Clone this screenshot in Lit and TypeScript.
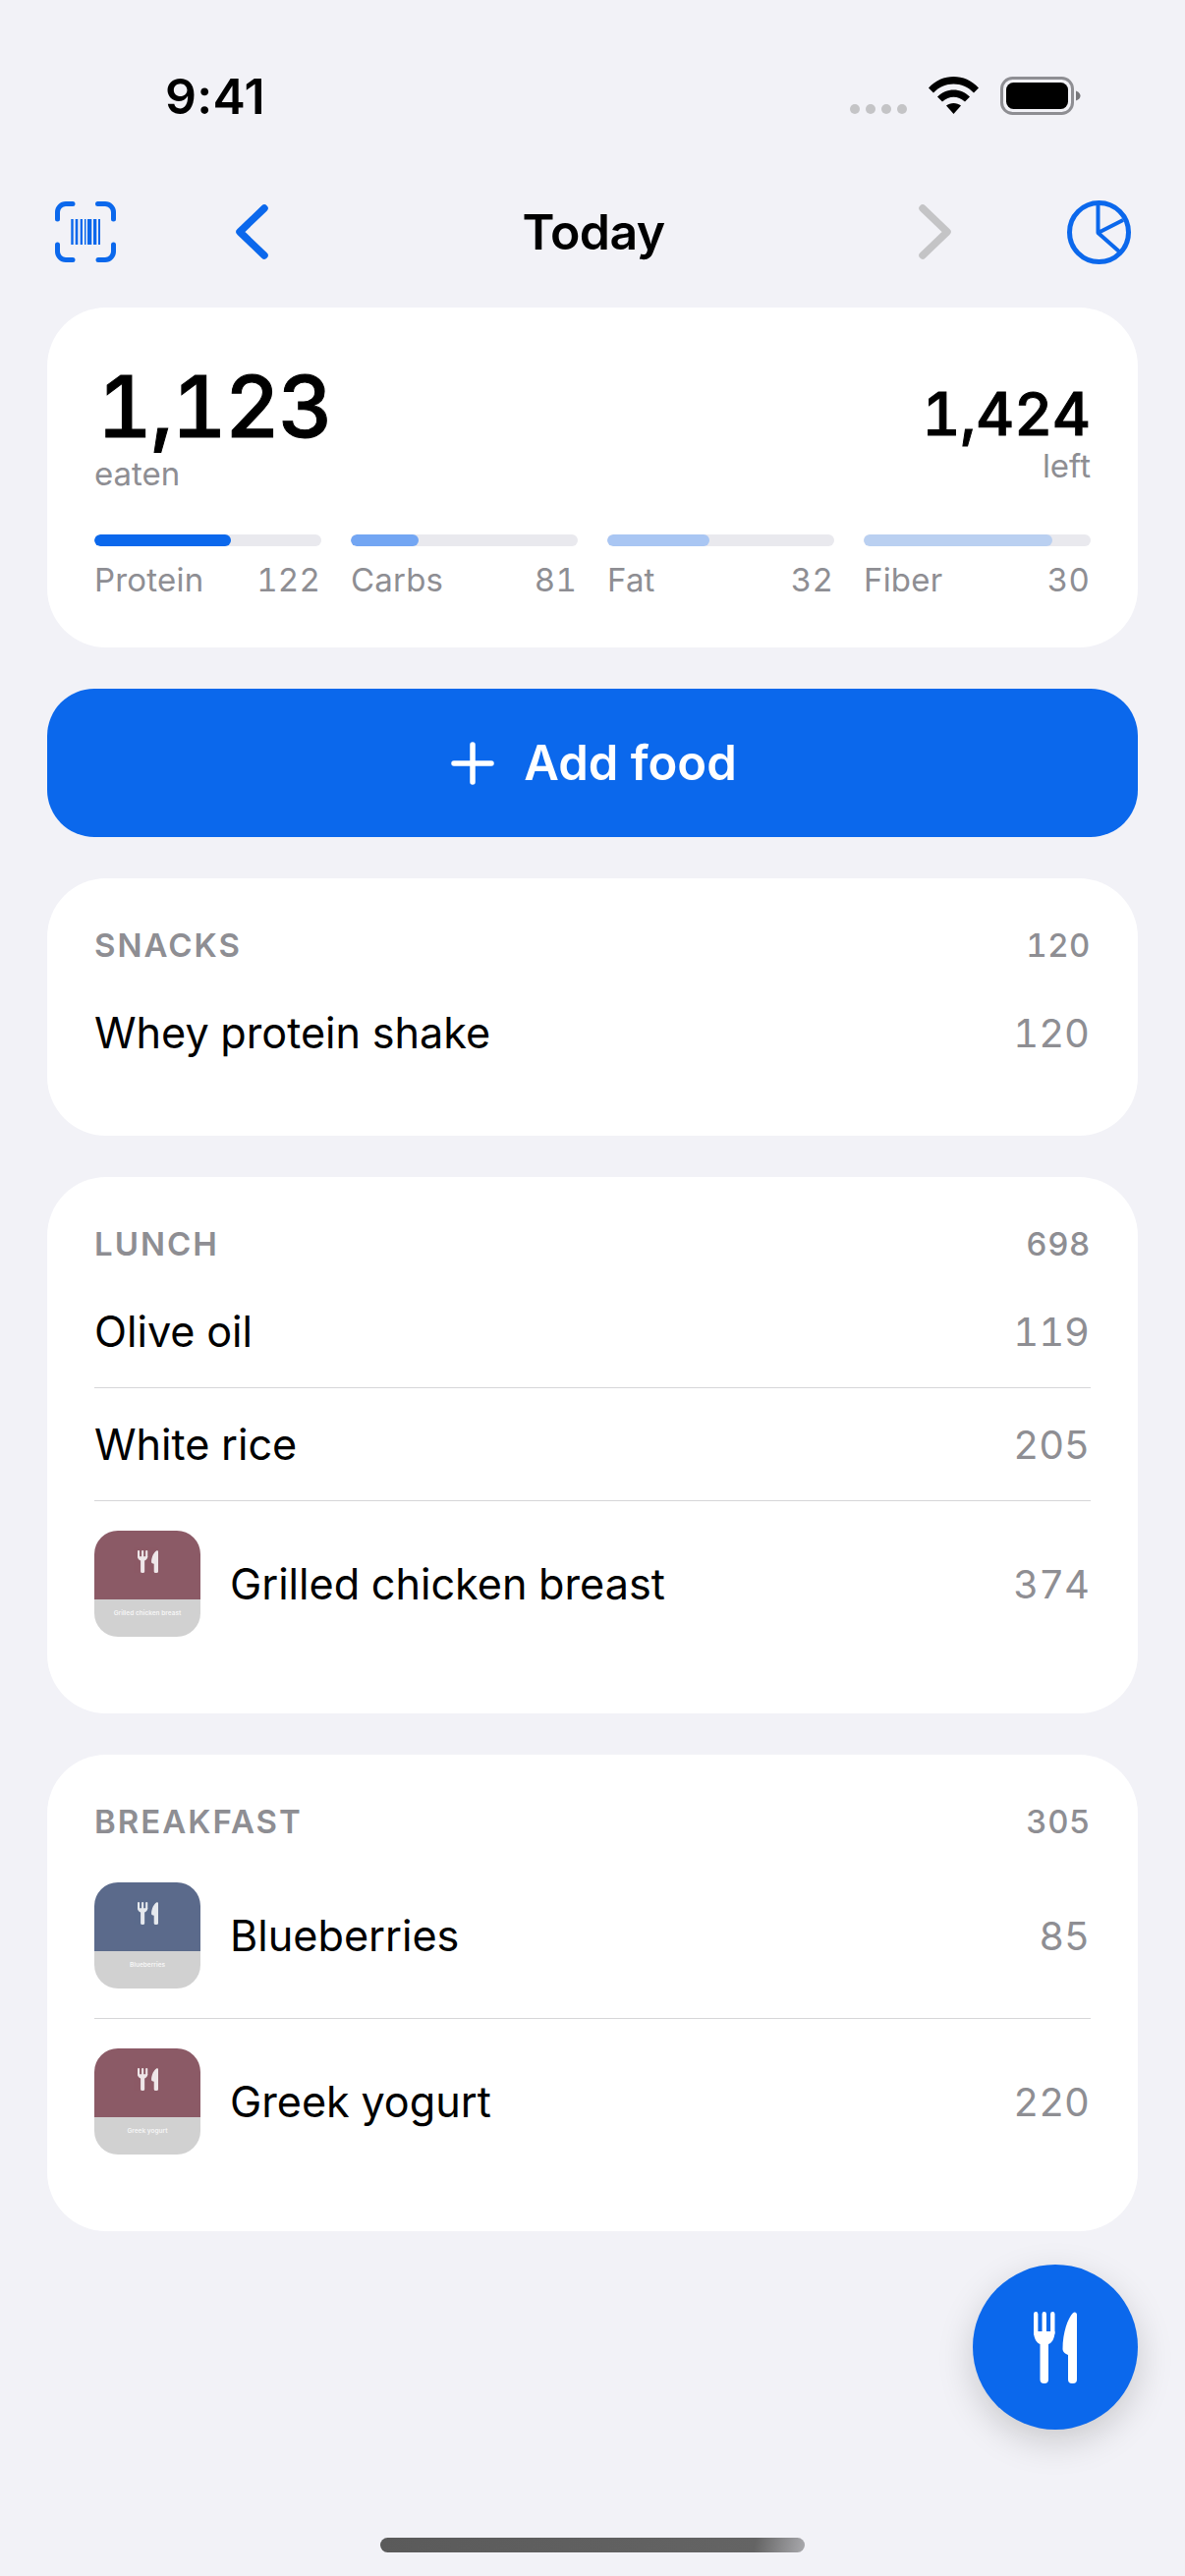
import { LitElement, html, css, svg } from "lit";
import { customElement } from "lit/decorators.js";

type Item = { name: string; kcal: number; thumb?: string };
type Meal = { title: string; total: number; items: Item[] };

const MEALS: Meal[] = [
  { title: "Snacks", total: 120, items: [{ name: "Whey protein shake", kcal: 120 }] },
  {
    title: "Lunch",
    total: 698,
    items: [
      { name: "Olive oil", kcal: 119 },
      { name: "White rice", kcal: 205 },
      { name: "Grilled chicken breast", kcal: 374, thumb: "#8b5a66" },
    ],
  },
  {
    title: "Breakfast",
    total: 305,
    items: [
      { name: "Blueberries", kcal: 85, thumb: "#5b6a8b" },
      { name: "Greek yogurt", kcal: 220, thumb: "#8b5a66" },
    ],
  },
];

const MACROS = [
  { name: "Protein", value: 122, pct: 60, color: "#0b68ec" },
  { name: "Carbs", value: 81, pct: 30, color: "#73a6f3" },
  { name: "Fat", value: 32, pct: 45, color: "#a9c6f3" },
  { name: "Fiber", value: 30, pct: 83, color: "#bad0f1" },
];

const cutlery = svg`
  <path d="M2.2 2.2V22M10.75 2.2V22M19.3 2.2V22" fill="none" stroke="currentColor" stroke-width="4.4" stroke-linecap="round"/>
  <path d="M0 20C0 28 3.5 32 6.500 33V69a4 4 0 0 0 4 4h.5a4 4 0 0 0 4-4V33C18 32 21.500 28 21.500 20Z" fill="currentColor"/>
  <path d="M29.500 38C29.500 21 35 6 40 1.200 41.800-.4 44 .8 44 3V69a4 4 0 0 1-4 4h-1a4 4 0 0 1-4-4V44C32.500 43 29.500 41 29.500 38Z" fill="currentColor"/>`;

@customElement("app-root")
export class AppRoot extends LitElement {
  static styles = css`
    :host {
      display: flex;
      flex-direction: column;
      position: relative;
      width: 1206px;
      height: 2622px;
      overflow: hidden;
      background: #f2f2f7;
      font-family: Inter, "Liberation Sans", sans-serif;
      font-variant-numeric: tabular-nums;
      color: #000;
    }
    .status {
      display: flex;
      align-items: flex-start;
      height: 92px;
      padding: 78px 106px 0 168px;
    }
    .time {
      font-size: 50px;
      font-weight: 600;
      line-height: 40px;
      letter-spacing: 0.3px;
      font-variant-numeric: normal;
      flex: 1;
    }
    .dots {
      display: flex;
      gap: 6px;
      margin-top: 28px;
      margin-right: 22px;
    }
    .dots i {
      width: 10px;
      height: 10px;
      border-radius: 50%;
      background: #c4c4c6;
    }
    .wifi {
      width: 51px;
      height: 38px;
      margin-right: 22px;
    }
    .battery {
      width: 82px;
      height: 39px;
    }
    .nav {
      display: flex;
      align-items: center;
      height: 132px;
      padding: 0 55px 0 56px;
      color: #0b68ec;
    }
    .nav svg {
      flex: none;
      display: block;
    }
    .back {
      margin-left: 122px;
    }
    .title {
      flex: 1;
      text-align: center;
      font-size: 50px;
      font-weight: 600;
      color: #000;
      letter-spacing: -0.6px;
    }
    .forward {
      color: #c4c4c6;
      margin-right: 118px;
    }
    .content {
      display: flex;
      flex-direction: column;
      gap: 42px;
      margin: 11px 48px 0;
    }
    .card {
      background: #fff;
      border-radius: 60px;
      padding: 48px;
    }
    .summary {
      height: 346px;
      box-sizing: border-box;
      padding-top: 58px;
    }
    .totals {
      display: flex;
      justify-content: space-between;
      height: 173px;
    }
    .eaten-num {
      font-size: 86px;
      font-weight: 500;
      line-height: 86px;
      letter-spacing: -1.5px;
      margin-left: 3px;
      -webkit-text-stroke: 1px #000;
    }
    .eaten-num + .sub {
      margin-top: 5px;
    }
    .sub {
      font-size: 33px;
      line-height: 40px;
      color: #8e8e93;
    }
    .left {
      text-align: right;
      padding-top: 17px;
    }
    .left-num {
      font-size: 60px;
      font-weight: 500;
      line-height: 66px;
      -webkit-text-stroke: 1px #000;
    }
    .macros {
      display: grid;
      grid-template-columns: repeat(4, 1fr);
      gap: 30px;
    }
    .track {
      height: 12px;
      border-radius: 6px;
      background: #e9e9ee;
      overflow: hidden;
    }
    .fill {
      height: 100%;
      border-radius: 6px;
    }
    .macro-row {
      display: flex;
      justify-content: space-between;
      margin-top: 14px;
      font-size: 33px;
      line-height: 40px;
      color: #8e8e93;
      padding-right: 1px;
      letter-spacing: 0.2px;
    }
    .macro-row b {
      font-weight: 400;
    }
    .add {
      display: flex;
      align-items: center;
      justify-content: center;
      gap: 30px;
      height: 151px;
      padding: 0 0 0 3px;
      border: 0;
      border-radius: 48px;
      background: #0b68ec;
      color: #fff;
      font: 600 49px Inter, "Liberation Sans", sans-serif;
    }
    .meal {
      padding-bottom: 48px;
    }
    .meal-head {
      display: flex;
      justify-content: space-between;
      height: 52px;
      line-height: 40px;
      font-size: 33px;
      color: #8e8e93;
    }
    .meal-head span:first-child {
      text-transform: uppercase;
      font-weight: 600;
      letter-spacing: 2px;
    }
    .meal-head span:last-child {
      font-weight: 500;
      letter-spacing: 0.5px;
    }
    .row {
      display: flex;
      align-items: center;
      box-sizing: border-box;
      min-height: 115px;
      font-size: 43.2px;
      border-bottom: 1px solid #d6d6d8;
    }
    .row:last-child {
      border-bottom: 0;
      min-height: 114px;
    }
    .row.has-thumb {
      padding: 30px 0;
    }
    .row .name {
      flex: 1;
    }
    .row .kcal {
      color: #8e8e93;
      font-size: 40px;
      padding-right: 1px;
    }
    .thumb {
      width: 108px;
      height: 108px;
      border-radius: 24px;
      overflow: hidden;
      margin-right: 30px;
      display: flex;
      flex-direction: column;
      flex: none;
    }
    .thumb-top {
      height: 70px;
      display: flex;
      justify-content: center;
      padding-top: 20px;
      box-sizing: border-box;
      color: #fff;
    }
    .thumb-top svg {
      opacity: 0.85;
    }
    .thumb-label {
      flex: 1;
      background: #d1d1d1;
      color: rgba(255, 255, 255, 0.8);
      font-size: 6.5px;
      font-weight: 600;
      text-align: center;
      line-height: 28px;
      white-space: nowrap;
    }
    .fab {
      position: absolute;
      left: 990px;
      top: 2305px;
      width: 168px;
      height: 168px;
      border-radius: 50%;
      background: #0b68ec;
      color: #fff;
      display: flex;
      align-items: center;
      justify-content: center;
      box-shadow: 0 12px 36px rgba(0, 0, 0, 0.17);
    }
    .home {
      position: absolute;
      left: 387px;
      top: 2583px;
      width: 432px;
      height: 15px;
      border-radius: 8px;
      background: linear-gradient(100deg, #5a5a5a 0%, #646464 88%, #a9a9ad 100%);
    }
  `;

  private macro(m: (typeof MACROS)[number]) {
    return html`<div>
      <div class="track"><div class="fill" style="width:${m.pct}%;background:${m.color}"></div></div>
      <div class="macro-row"><span>${m.name}</span><b>${m.value}</b></div>
    </div>`;
  }

  private row(it: Item) {
    return html`<div class="row ${it.thumb ? "has-thumb" : ""}">
      ${it.thumb
        ? html`<div class="thumb">
            <div class="thumb-top" style="background:${it.thumb}">
              <svg width="21" height="23" viewBox="0 0 44 73" preserveAspectRatio="none">${cutlery}</svg>
            </div>
            <div class="thumb-label">${it.name}</div>
          </div>`
        : ""}
      <span class="name">${it.name}</span>
      <span class="kcal">${it.kcal}</span>
    </div>`;
  }

  render() {
    return html`
      <div class="status">
        <div class="time">9:41</div>
        <div class="dots"><i></i><i></i><i></i><i></i></div>
        <svg class="wifi" viewBox="0 0 51 38">
          <path d="M0 11.500C14-3.800 37-3.800 51 11.500L46 16.500C35 4.500 16 4.500 5 16.500Z" />
          <path d="M9 20.500C18 11 33 11 42 20.500L37 25.500C30 19 21 19 14 25.500Z" />
          <path d="M18 29.500C22 26 29 26 33 29.500L25.500 38Z" />
        </svg>
        <svg class="battery" viewBox="0 0 82 39">
          <rect x="1.500" y="1.500" width="72" height="36" rx="11" fill="none" stroke="#8e8e93" stroke-width="3" />
          <rect x="6" y="6" width="63" height="27" rx="7.500" />
          <path d="M77 14.500c3 1 4.500 3 4.500 5s-1.500 4-4.500 5Z" fill="#77777b" />
        </svg>
      </div>

      <div class="nav">
        <svg width="62" height="62" viewBox="0 0 62 62" fill="none" stroke="currentColor" stroke-width="5" stroke-linecap="round">
          <path d="M2.500 18V11a8.500 8.500 0 0 1 8.500-8.500h7M43.500 2.500H51a8.500 8.500 0 0 1 8.500 8.500v7M59.500 44v7a8.500 8.500 0 0 1-8.500 8.500h-7M18 59.500h-7A8.500 8.500 0 0 1 2.500 51v-7" />
          <path d="M16.300 18h2.400v26h-2.400zM20.700 18h2.600v26h-2.600zM25.700 18h2.300v26h-2.300zM30 18h1.500v26H30zM33 18h4.300v26H33zM39 18h3.300v26H39zM44 18h2v26h-2z" fill="currentColor" stroke="none" />
        </svg>
        <svg class="back" width="33" height="56" viewBox="0 0 33 56" fill="none" stroke="currentColor" stroke-width="7.500" stroke-linecap="round" stroke-linejoin="round">
          <path d="M29 4 4 28l25 24" />
        </svg>
        <div class="title">Today</div>
        <svg class="forward" width="33" height="56" viewBox="0 0 33 56" fill="none" stroke="currentColor" stroke-width="7.500" stroke-linecap="round" stroke-linejoin="round">
          <path d="m4 4 25 24L4 52" />
        </svg>
        <svg width="65" height="65" viewBox="0 0 65 65" fill="none" stroke="currentColor" stroke-width="4" stroke-linejoin="round">
          <circle cx="32.500" cy="32.500" r="30" stroke-width="5" />
          <path d="M31.500 4v29L57 20M31.500 33 53 52" />
        </svg>
      </div>

      <div class="content">
        <section class="card summary">
          <div class="totals">
            <div>
              <div class="eaten-num">1,123</div>
              <div class="sub">eaten</div>
            </div>
            <div class="left">
              <div class="left-num">1,424</div>
              <div class="sub">left</div>
            </div>
          </div>
          <div class="macros">${MACROS.map((m) => this.macro(m))}</div>
        </section>

        <button class="add">
          <svg width="44" height="44" viewBox="0 0 44 44" stroke="currentColor" stroke-width="5.500" stroke-linecap="round">
            <path d="M22 3v38M3 22h38" />
          </svg>
          <span>Add food</span>
        </button>

        ${MEALS.map(
          (m) => html`<section class="card meal">
            <div class="meal-head"><span>${m.title}</span><span>${m.total}</span></div>
            ${m.items.map((it) => this.row(it))}
          </section>`
        )}
      </div>

      <div class="fab">
        <svg width="44" height="73" viewBox="0 0 44 73">${cutlery}</svg>
      </div>
      <div class="home"></div>
    `;
  }
}
